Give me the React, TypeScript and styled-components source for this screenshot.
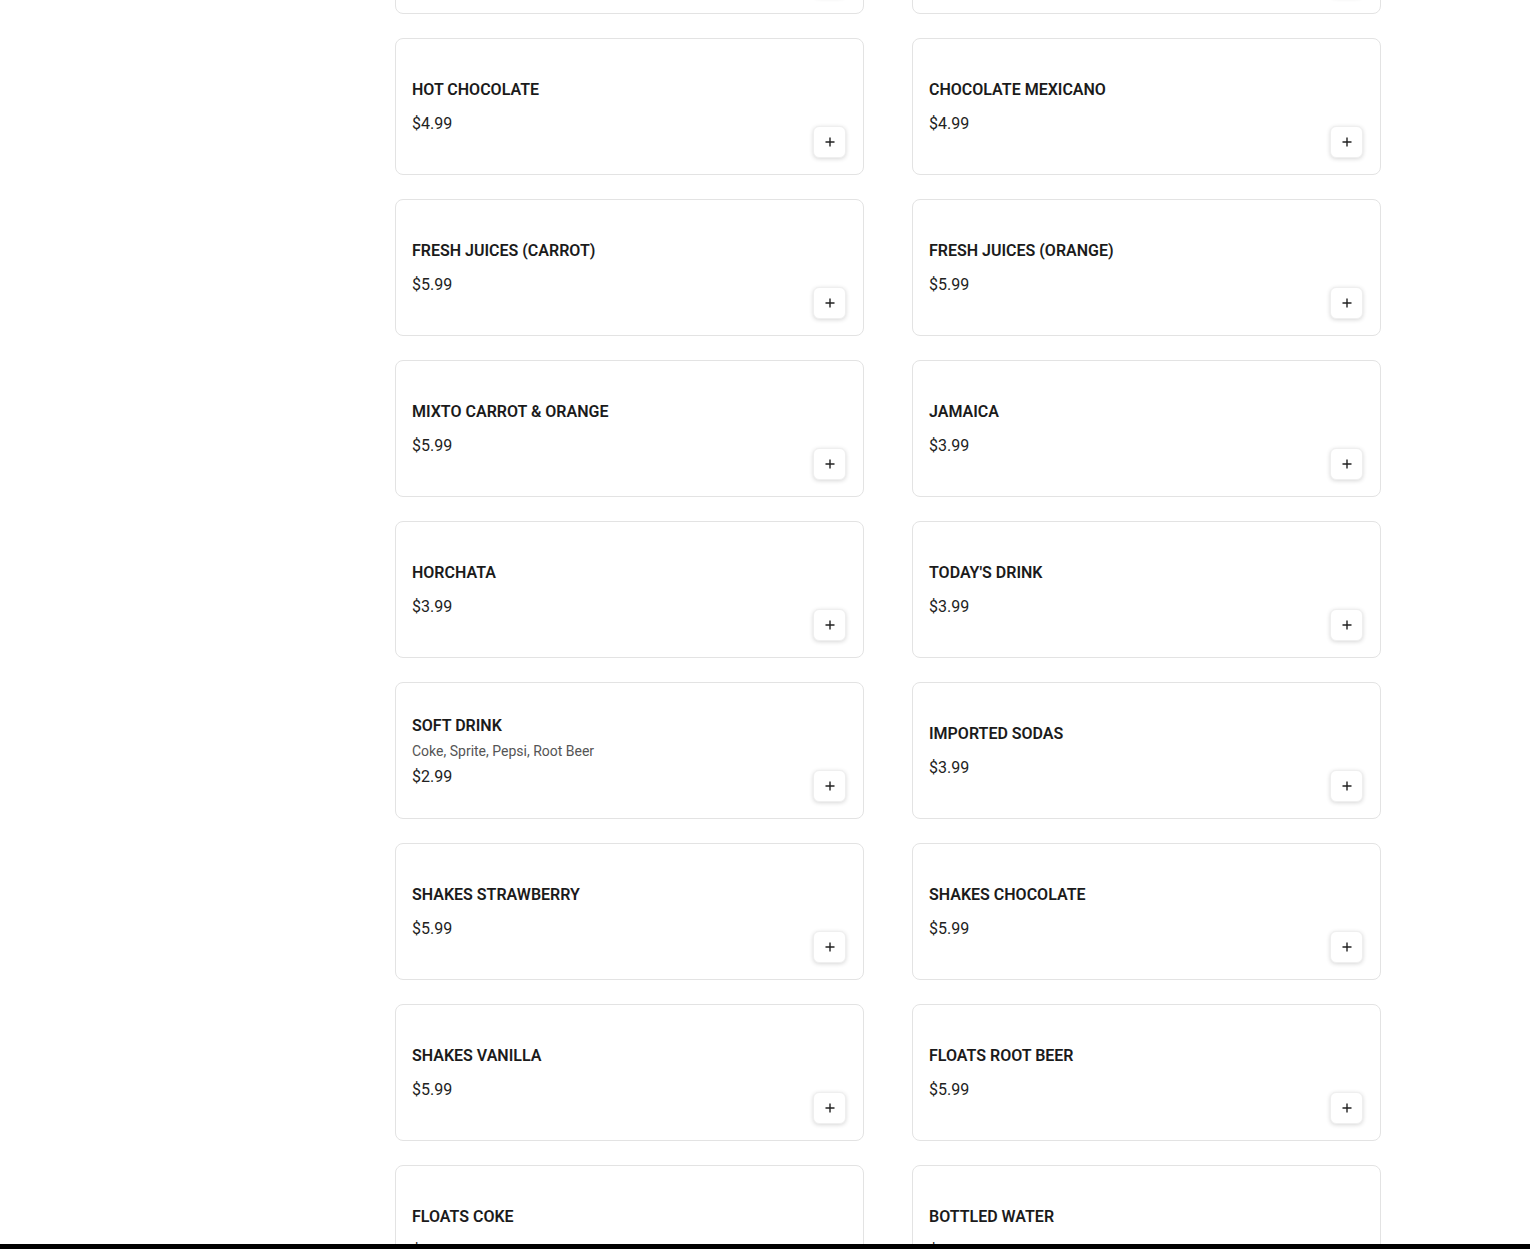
import React from 'react';
import styled, { createGlobalStyle } from 'styled-components';

const GlobalStyle = createGlobalStyle`
  html, body {
    margin: 0;
    padding: 0;
    background: #ffffff;
    font-family: Roboto, "Liberation Sans", Arial, sans-serif;
    color: #1a1a1a;
    overflow: hidden;
  }
`;

const Page = styled.main`
  padding-left: 395px;
  margin-top: -123px;
`;

const MenuGrid = styled.section`
  display: grid;
  grid-template-columns: 469px 469px;
  column-gap: 48px;
  row-gap: 24px;
`;

const Card = styled.article`
  box-sizing: border-box;
  height: 137px;
  border: 1px solid #e3e3e3;
  border-radius: 8px;
  background: #fff;
  padding: 16px;
  display: flex;
  align-items: stretch;
`;

const ItemInfo = styled.div<{ $withDesc?: boolean }>`
  flex: 1;
  display: flex;
  flex-direction: column;
  justify-content: center;
  padding-top: ${(p) => (p.$withDesc ? 2 : 0)}px;
`;

const ItemName = styled.h3`
  margin: 0;
  font-size: 16px;
  line-height: 24px;
  font-weight: 600;
  color: #1b1b1b;
  text-transform: uppercase;
`;

const ItemDescription = styled.p`
  margin: 3px 0 0;
  font-size: 14px;
  line-height: 20px;
  color: #555;
`;

const ItemPrice = styled.div<{ $afterDesc?: boolean }>`
  margin-top: ${(p) => (p.$afterDesc ? 4 : 10)}px;
  font-size: 16px;
  line-height: 24px;
  color: #222;
`;

const AddButton = styled.button`
  align-self: flex-end;
  flex-shrink: 0;
  width: 33px;
  height: 32px;
  margin-right: 1px;
  padding: 0;
  border: 1px solid #efefef;
  border-radius: 6px;
  background: #fff;
  box-shadow: 0 1px 4px rgba(0, 0, 0, 0.16);
  display: flex;
  align-items: center;
  justify-content: center;
  cursor: pointer;
  color: #222;
`;

const BottomBar = styled.div`
  position: fixed;
  left: 0;
  right: 0;
  bottom: 0;
  height: 5px;
  background: #000;
`;

interface MenuItem {
  name: string;
  price: string;
  description?: string;
}

const items: MenuItem[] = [
  { name: 'Coffee', price: '$2.99' },
  { name: 'Cafe de Olla', price: '$3.99' },
  { name: 'Hot Chocolate', price: '$4.99' },
  { name: 'Chocolate Mexicano', price: '$4.99' },
  { name: 'Fresh Juices (Carrot)', price: '$5.99' },
  { name: 'Fresh Juices (Orange)', price: '$5.99' },
  { name: 'Mixto Carrot & Orange', price: '$5.99' },
  { name: 'Jamaica', price: '$3.99' },
  { name: 'Horchata', price: '$3.99' },
  { name: "Today's Drink", price: '$3.99' },
  { name: 'Soft Drink', price: '$2.99', description: 'Coke, Sprite, Pepsi, Root Beer' },
  { name: 'Imported Sodas', price: '$3.99' },
  { name: 'Shakes Strawberry', price: '$5.99' },
  { name: 'Shakes Chocolate', price: '$5.99' },
  { name: 'Shakes Vanilla', price: '$5.99' },
  { name: 'Floats Root Beer', price: '$5.99' },
  { name: 'Floats Coke', price: '$5.99' },
  { name: 'Bottled Water', price: '$1.75' },
];

const PlusIcon = () => (
  <svg width="10" height="10" viewBox="0 0 10 10" fill="none">
    <path d="M5 0.5v9M0.5 5h9" stroke="currentColor" strokeWidth="1.4" />
  </svg>
);

export default function App() {
  return (
    <>
      <GlobalStyle />
      <Page>
        <MenuGrid>
          {items.map((item) => (
            <Card key={item.name}>
              <ItemInfo $withDesc={!!item.description}>
                <ItemName>{item.name}</ItemName>
                {item.description && (
                  <ItemDescription>{item.description}</ItemDescription>
                )}
                <ItemPrice $afterDesc={!!item.description}>{item.price}</ItemPrice>
              </ItemInfo>
              <AddButton aria-label={`Add ${item.name}`}>
                <PlusIcon />
              </AddButton>
            </Card>
          ))}
        </MenuGrid>
      </Page>
      <BottomBar />
    </>
  );
}
